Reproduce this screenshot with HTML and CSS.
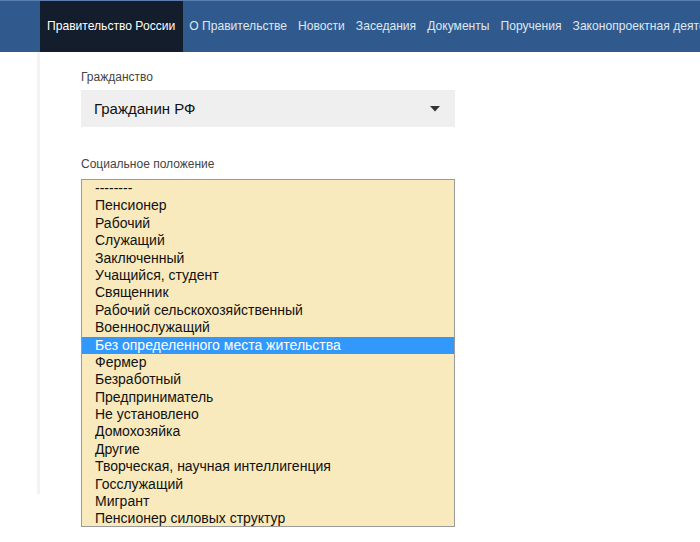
FILE: index.html
```html
<!DOCTYPE html>
<html lang="ru">
<head>
<meta charset="utf-8">
<title>Правительство России</title>
<link rel="stylesheet" href="styles.css">
</head>
<body>
<nav class="topnav">
  <a class="nav-item active" href="#">Правительство России</a>
  <a class="nav-item" href="#">О Правительстве</a>
  <a class="nav-item" href="#">Новости</a>
  <a class="nav-item" href="#">Заседания</a>
  <a class="nav-item" href="#">Документы</a>
  <a class="nav-item" href="#">Поручения</a>
  <a class="nav-item" href="#">Законопроектная деятельность</a>
</nav>
<main class="page">
  <div class="panel">
    <div class="field">
      <div class="label">Гражданство</div>
      <div class="select">
        <span>Гражданин РФ</span>
        <svg class="caret" width="10" height="6" viewBox="0 0 10 6"><path d="M0 0H10L5 5.5Z" fill="#333"/></svg>
      </div>
    </div>
    <div class="field">
      <div class="label">Социальное положение</div>
      <ul class="listbox">
        <li>--------</li>
        <li>Пенсионер</li>
        <li>Рабочий</li>
        <li>Служащий</li>
        <li>Заключенный</li>
        <li>Учащийся, студент</li>
        <li>Священник</li>
        <li>Рабочий сельскохозяйственный</li>
        <li>Военнослужащий</li>
        <li class="selected">Без определенного места жительства</li>
        <li>Фермер</li>
        <li>Безработный</li>
        <li>Предприниматель</li>
        <li>Не установлено</li>
        <li>Домохозяйка</li>
        <li>Другие</li>
        <li>Творческая, научная интеллигенция</li>
        <li>Госслужащий</li>
        <li>Мигрант</li>
        <li>Пенсионер силовых структур</li>
      </ul>
    </div>
  </div>
</main>
</body>
</html>
```
FILE: styles.css
```css
* { box-sizing: border-box; }
html, body { margin: 0; padding: 0; background: #fff; }
body {
  font-family: "Liberation Sans", Arial, sans-serif;
  color: #222;
  width: 700px;
  height: 542px;
  overflow: hidden;
}
.topnav {
  display: flex;
  height: 52px;
  background: #305a8d;
  border-top: 1px solid #5a7fae;
  padding-left: 40px;
  white-space: nowrap;
  overflow: hidden;
}
.nav-item {
  display: flex;
  align-items: center;
  flex-shrink: 0;
  padding: 0 5px 2px 6px;
  color: #dfe7f2;
  text-decoration: none;
  font-size: 12.1px;
}
.nav-item.active {
  background: #141d2c;
  color: #fff;
  padding: 0 8px 2px 7px;
}
.page {
  padding-left: 37px;
}
.panel {
  width: 420px;
  height: 442px;
  border-left: 3px solid #f3f3f3;
  padding: 18px 0 0 41px;
}
.field { width: 374px; }
.field + .field { margin-top: 30px; }
.label {
  font-size: 12px;
  color: #444;
  height: 14px;
  line-height: 14px;
  margin-bottom: 6px;
}
.select {
  display: flex;
  align-items: center;
  justify-content: space-between;
  height: 37px;
  background: #efefef;
  padding: 0 15px 0 13px;
  font-size: 15px;
  color: #111;
}
.caret { display: block; }
.listbox {
  list-style: none;
  margin: 8px 0 0 0;
  padding: 0 0 4px 0;
  width: 374px;
  height: 348px;
  background: #f9eabe;
  border: 1px solid #9a9a9a;
  font-size: 14px;
  color: #111;
}
.listbox li {
  height: 17.4px;
  line-height: 17.4px;
  padding-left: 13px;
  white-space: nowrap;
}
.listbox li.selected {
  background: #3398fc;
  color: #fff;
}
```
